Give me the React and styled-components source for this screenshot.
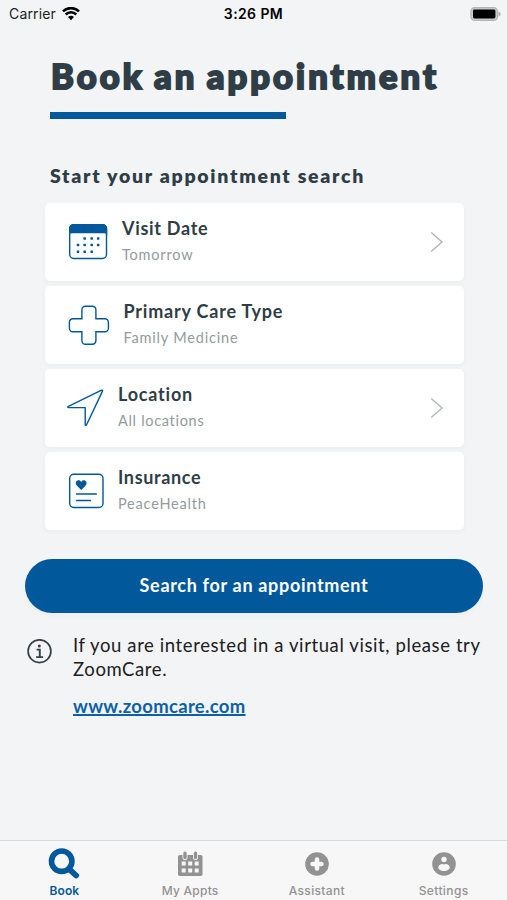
import React from "react";
import styled, { createGlobalStyle } from "styled-components";

const BLUE = "#01589b";
const INK = "#2f3e46";

const GlobalStyle = createGlobalStyle`
  * { box-sizing: border-box; }
  body { margin: 0; background: #f2f4f6; font-family: Lato, "Open Sans", sans-serif; }
  svg { display: block; flex: none; }
`;

const Screen = styled.div`
  width: 507px;
  height: 900px;
  display: flex;
  flex-direction: column;
  overflow: hidden;
  background: #f2f4f6;
`;

const StatusBar = styled.header`
  height: 28px;
  padding: 0 6px 0 9px;
  display: grid;
  grid-template-columns: 1fr auto 1fr;
  align-items: center;
  font: 400 14px/28px Inter, sans-serif;
  color: #1a1c1e;
`;

const Carrier = styled.div`
  display: flex;
  align-items: center;
  gap: 6px;
  letter-spacing: 0.15px;
`;

const Clock = styled.div`
  font-weight: 600;
  letter-spacing: 0.4px;
  margin-right: 3px;
  color: #000;
`;

const BatterySlot = styled.div`
  display: flex;
  justify-content: flex-end;
`;

const Main = styled.main`
  flex: 1;
  display: flex;
  flex-direction: column;
`;

const Title = styled.h1`
  margin: 27px 0 0 51px;
  font-size: 34.5px;
  font-weight: 900;
  line-height: 42px;
  letter-spacing: 3.1px;
  word-spacing: -2px;
  white-space: nowrap;
  color: ${INK};
  -webkit-text-stroke: 2px ${INK};
`;

const Rule = styled.div`
  width: 236px;
  height: 7px;
  margin: 15px 0 0 50px;
  background: ${BLUE};
`;

const Subtitle = styled.h2`
  margin: 45px 0 0 50px;
  font-size: 19.5px;
  font-weight: 800;
  line-height: 24px;
  letter-spacing: 1.7px;
  white-space: nowrap;
  color: ${INK};
`;

const CardList = styled.div`
  margin: 15px 43.5px 0 45px;
  display: flex;
  flex-direction: column;
  gap: 5px;
`;

const Card = styled.div`
  height: 78px;
  display: flex;
  align-items: center;
  padding: 0 20px 0 21px;
  border-radius: 5px;
  background: #fff;
  box-shadow: 0 2px 5px rgba(60, 60, 40, 0.045);
`;

const CardText = styled.div`
  flex: 1;
  align-self: flex-start;
  padding-top: 14px;
  margin-left: ${(p) => p.$gap}px;
  white-space: nowrap;
`;

const CardTitle = styled.div`
  font-size: 18px;
  font-weight: 700;
  line-height: 22px;
  letter-spacing: ${(p) => p.$spacing}px;
  color: ${INK};
`;

const CardValue = styled.div`
  margin-top: 6px;
  font-size: 14.5px;
  line-height: 20px;
  letter-spacing: ${(p) => p.$spacing}px;
  color: #929ba0;
`;

const SearchButton = styled.button`
  width: 458px;
  height: 54px;
  margin: 29px 0 0 25px;
  padding: 0 0 3px;
  border: 0;
  border-radius: 27px;
  background: ${BLUE};
  color: #fff;
  font: 700 18px/22px Lato, sans-serif;
  letter-spacing: 0.68px;
  box-shadow: 0 2px 4px rgba(60, 60, 60, 0.04);
`;

const Notice = styled.section`
  display: flex;
  gap: 21px;
  padding: 20px 0 0 27px;
  & > svg { margin-top: 6px; }
`;

const NoticeText = styled.div`
  font-size: 18.5px;
  line-height: 24px;
  letter-spacing: 0.6px;
  white-space: nowrap;
  color: #1d2022;
`;

const NoticeLink = styled.a`
  display: block;
  width: max-content;
  margin-top: 13px;
  font-size: 18.5px;
  font-weight: 700;
  letter-spacing: 0.3px;
  color: #0c61a5;
  text-decoration: underline;
  text-decoration-thickness: 1.5px;
  text-underline-offset: 1px;
  text-decoration-skip-ink: none;
`;

const TabBar = styled.nav`
  height: 60px;
  display: grid;
  grid-template-columns: repeat(4, 1fr);
  border-top: 1px solid #d9dadd;
  background: #f7f7f7;
`;

const Tab = styled.div`
  display: flex;
  flex-direction: column;
  align-items: center;
  color: ${(p) => (p.$active ? BLUE : "#929292")};
  font: ${(p) => (p.$active ? 600 : 500)} 12px/16px Inter, sans-serif;
  letter-spacing: ${(p) => p.$spacing}px;
  padding-left: ${(p) => (p.$active ? 2 : 0)}px;
`;

const TabIcon = styled.div`
  height: 42px;
  padding-top: 4px;
  display: flex;
  align-items: center;
`;

const WifiIcon = () => (
  <svg width="18" height="14" viewBox="0 0 18 14">
    <path d="M9 13.200 6 10.100a4.300 4.300 0 0 1 6 0Z" fill="#000" />
    <path d="M3.700 7.500a7.500 7.500 0 0 1 10.600 0M1 4.400a11.300 11.300 0 0 1 16 0" fill="none" stroke="#000" strokeWidth="2.600" />
  </svg>
);

const BatteryIcon = () => (
  <svg width="31" height="15" viewBox="0 0 31 15">
    <rect x=".9" y=".6" width="26.600" height="12.800" rx="3.700" fill="#c9cacc" stroke="#b5b6b8" strokeWidth="1.200" />
    <path d="M28.400 4.400c3 .8 3 4.400 0 5.200Z" fill="#b1b2b4" />
    <rect x="3" y="2.500" width="22.400" height="9" rx="1.400" fill="#000" />
  </svg>
);

const DOTS = [
  [15.7, 14.5], [22.7, 14.5], [29.2, 14.5],
  [9, 21], [15.7, 21], [22.7, 21], [29.2, 21],
  [9, 27.7], [15.7, 27.7], [22.7, 27.7],
];

const DateIcon = () => (
  <svg width="44" height="40" viewBox="-3 -2 44 40">
    <rect x=".7" y=".7" width="36.800" height="33.800" rx="4" fill="#fff" stroke={BLUE} strokeWidth="1.400" />
    <path d="M0 12V4.600A4.600 4.600 0 0 1 4.600 0h29A4.600 4.600 0 0 1 38.200 4.600V12a3 3 0 0 0-3-2.800H3A3 3 0 0 0 0 12Z" fill={BLUE} />
    {DOTS.map(([x, y]) => (
      <rect key={`${x}-${y}`} x={x - 1.3} y={y - 1.3} width="2.6" height="2.6" rx=".7" fill={BLUE} />
    ))}
  </svg>
);

const CareIcon = () => (
  <svg width="44" height="42" viewBox="-2.500 -1 44 42">
    <path
      d="M17 1h7a3.500 3.500 0 0 1 3.500 3.500v9h9a3.500 3.500 0 0 1 3.500 3.500v6a3.500 3.500 0 0 1-3.500 3.500h-9v9a3.500 3.500 0 0 1-3.500 3.500h-7a3.500 3.500 0 0 1-3.500-3.500v-9H4.500A3.500 3.500 0 0 1 1 23v-6a3.500 3.500 0 0 1 3.500-3.500h9v-9A3.500 3.500 0 0 1 17 1Z"
      fill="none"
      stroke={BLUE}
      strokeWidth="1.400"
      transform="translate(-.1 .2)"
    />
  </svg>
);

const LocationIcon = () => (
  <svg width="40" height="40" viewBox="0 0 40 40">
    <path d="M2.400 18.300 35.600 2.200c.7-.3 1.200.2.900.9L20.600 36.800c-.4.800-1.400.5-1.400-.3V19.600H2.700c-1 0-1.200-1-.3-1.300Z" fill="none" stroke={BLUE} strokeWidth="1.400" strokeLinejoin="round" />
  </svg>
);

const InsuranceIcon = () => (
  <svg width="40" height="40" viewBox="-3 -2.500 40 40">
    <rect x=".7" y=".7" width="33.300" height="33.300" rx="4" fill="none" stroke={BLUE} strokeWidth="1.400" />
    <path d="M12.200 16.600 8 12.200C6.300 10.500 6.400 8.100 8.100 7.200c1.500-.9 3.300-.2 4.100 1.200.8-1.400 2.600-2.100 4.100-1.200 1.700.9 1.800 3.300.1 5Z" fill={BLUE} />
    <path d="M7.500 20.500h19.800M7.500 27h14" stroke={BLUE} strokeWidth="1.400" strokeLinecap="round" />
  </svg>
);

const Chevron = () => (
  <svg width="14" height="22" viewBox="0 0 14 22">
    <path d="M1.200 1.500 12 11 1.200 20.500" fill="none" stroke="#b0b5b7" strokeWidth="1.400" />
  </svg>
);

const InfoIcon = () => (
  <svg width="25" height="25" viewBox="0 0 25 25">
    <circle cx="12.500" cy="12.200" r="11.400" fill="none" stroke="#35404a" strokeWidth="1.700" />
    <circle cx="12.300" cy="6.900" r="1.500" fill="#35404a" />
    <path d="M9.600 10.600h3.200v7.300M9.100 18.100h7" fill="none" stroke="#35404a" strokeWidth="1.900" />
  </svg>
);

const BookIcon = () => (
  <svg width="32" height="32" viewBox="0 0 32 32">
    <circle cx="13.700" cy="13.200" r="10.200" fill="none" stroke={BLUE} strokeWidth="5.600" />
    <path d="m21.500 21.300 6.600 6.200" stroke={BLUE} strokeWidth="5.800" strokeLinecap="round" />
  </svg>
);

const ApptsIcon = () => (
  <svg width="26" height="26" viewBox="0 0 26 26">
    <rect x="1" y="4" width="24.500" height="21" rx="1.800" fill="#929292" />
    <path d="M8 2.600v4M18.500 2.600v4" stroke="#f7f7f7" strokeWidth="5" strokeLinecap="round" />
    <path d="M8 2.200v4.200M18.500 2.200v4.200" stroke="#929292" strokeWidth="3.400" strokeLinecap="round" />
    <path d="M4.700 10.400h4v4.200h-4zM11.200 10.400h4v4.200h-4zM17.700 10.400h4v4.200h-4zM4.700 17.400h4v4.200h-4zM11.200 17.400h4v4.200h-4zM17.700 17.400h4v4.200h-4z" fill="#f7f7f7" />
  </svg>
);

const AssistantIcon = () => (
  <svg width="24" height="24" viewBox="0 0 24 24">
    <circle cx="12" cy="12" r="11.800" fill="#929292" />
    <path d="M12 7.600v8.800M7.600 12h8.800" stroke="#f7f7f7" strokeWidth="4.600" strokeLinecap="round" />
  </svg>
);

const SettingsIcon = () => (
  <svg width="24" height="24" viewBox="0 0 24 24">
    <circle cx="12" cy="12" r="11.800" fill="#929292" />
    <circle cx="12" cy="7.400" r="2.700" fill="#f7f7f7" />
    <path d="M6.300 15.500c0-2.100 2-3.500 4-3.500 1 .5 2.400.5 3.400 0 2 0 4 1.400 4 3.500 0 2.100-2.900 3.600-5.700 3.600s-5.700-1.500-5.700-3.600Z" fill="#f7f7f7" />
  </svg>
);

const FIELDS = [
  { title: "Visit Date", value: "Tomorrow", Icon: DateIcon, gap: 12, ts: 0.7, vs: 0.8, link: true },
  { title: "Primary Care Type", value: "Family Medicine", Icon: CareIcon, gap: 13.5, ts: 0.8, vs: 0.82 },
  { title: "Location", value: "All locations", Icon: LocationIcon, gap: 12, ts: 0.8, vs: 0.7, link: true },
  { title: "Insurance", value: "PeaceHealth", Icon: InsuranceIcon, gap: 12, ts: 0.65, vs: 0.8 },
];

const TABS = [
  { label: "Book", Icon: BookIcon, spacing: 0.1, active: true },
  { label: "My Appts", Icon: ApptsIcon, spacing: 0.25 },
  { label: "Assistant", Icon: AssistantIcon, spacing: 0.35 },
  { label: "Settings", Icon: SettingsIcon, spacing: 0.4 },
];

export default function App() {
  return (
    <Screen>
      <GlobalStyle />
      <StatusBar>
        <Carrier>Carrier <WifiIcon /></Carrier>
        <Clock>3:26 PM</Clock>
        <BatterySlot><BatteryIcon /></BatterySlot>
      </StatusBar>
      <Main>
        <Title>Book an appointment</Title>
        <Rule />
        <Subtitle>Start your appointment search</Subtitle>
        <CardList>
          {FIELDS.map(({ title, value, Icon, gap, ts, vs, link }) => (
            <Card key={title}>
              <Icon />
              <CardText $gap={gap}>
                <CardTitle $spacing={ts}>{title}</CardTitle>
                <CardValue $spacing={vs}>{value}</CardValue>
              </CardText>
              {link && <Chevron />}
            </Card>
          ))}
        </CardList>
        <SearchButton>Search for an appointment</SearchButton>
        <Notice>
          <InfoIcon />
          <NoticeText>
            If you are interested in a virtual visit, please try<br />ZoomCare.
            <NoticeLink>www.zoomcare.com</NoticeLink>
          </NoticeText>
        </Notice>
      </Main>
      <TabBar>
        {TABS.map(({ label, Icon, spacing, active }) => (
          <Tab key={label} $active={active} $spacing={spacing}>
            <TabIcon><Icon /></TabIcon>
            {label}
          </Tab>
        ))}
      </TabBar>
    </Screen>
  );
}
